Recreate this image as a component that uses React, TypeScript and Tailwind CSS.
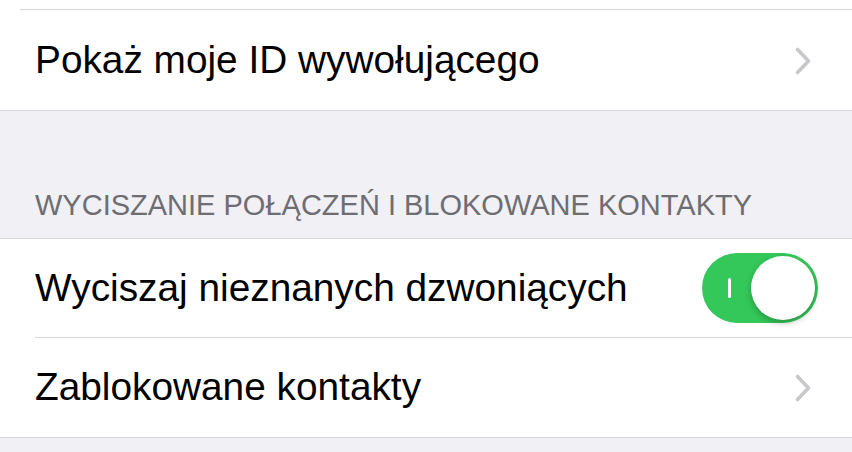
const font = { fontFamily: '"Liberation Sans", Arial, sans-serif' };

function Chevron() {
  return (
    <svg width="18" height="30" viewBox="0 0 18 30" className="shrink-0">
      <path d="M3.5 3.5 L14.5 15 L3.5 26.5" fill="none" stroke="#c7c7cc" strokeWidth="3.6" strokeLinecap="round" strokeLinejoin="round" />
    </svg>
  );
}

function Toggle() {
  return (
    <div className="relative -mr-[6px] h-[70px] w-[116px] shrink-0 rounded-full bg-[#34c759]">
      <div className="absolute left-[26px] top-[25px] h-[20px] w-[3px] rounded bg-white" />
      <div className="absolute right-[3px] top-[3px] h-[64px] w-[64px] rounded-full bg-white shadow-[0_3px_6px_rgba(0,0,0,0.25)]" />
    </div>
  );
}

function Row({ label, children, last }: { label: string; children: React.ReactNode; last?: boolean }) {
  return (
    <div className="flex h-[99px] items-stretch bg-white pl-[35px]">
      <div className={`flex flex-1 items-center justify-between pr-[40px] ${last ? '' : 'border-b border-[#d6d6da]'}`}>
        <span className="text-[38.8px] text-black">{label}</span>
        {children}
      </div>
    </div>
  );
}

export default function App() {
  return (
    <div className="h-[452px] w-[852px] overflow-hidden bg-[#f0f0f5]" style={font}>
      <div className="h-[11px] bg-white pl-[20px]">
        <div className="h-[10px] border-b border-[#d6d6da]" />
      </div>
      <div className="border-b border-[#d6d6da]">
        <Row label="Pokaż moje ID wywołującego" last>
          <Chevron />
        </Row>
      </div>
      <div className="flex h-[127px] items-end pb-[18px] pl-[35px] text-[29px] leading-none text-[#6d6d72]">
        WYCISZANIE POŁĄCZEŃ I BLOKOWANE KONTAKTY
      </div>
      <div className="border-y border-[#d6d6da]">
        <Row label="Wyciszaj nieznanych dzwoniących">
          <Toggle />
        </Row>
        <Row label="Zablokowane kontakty" last>
          <Chevron />
        </Row>
      </div>
    </div>
  );
}
